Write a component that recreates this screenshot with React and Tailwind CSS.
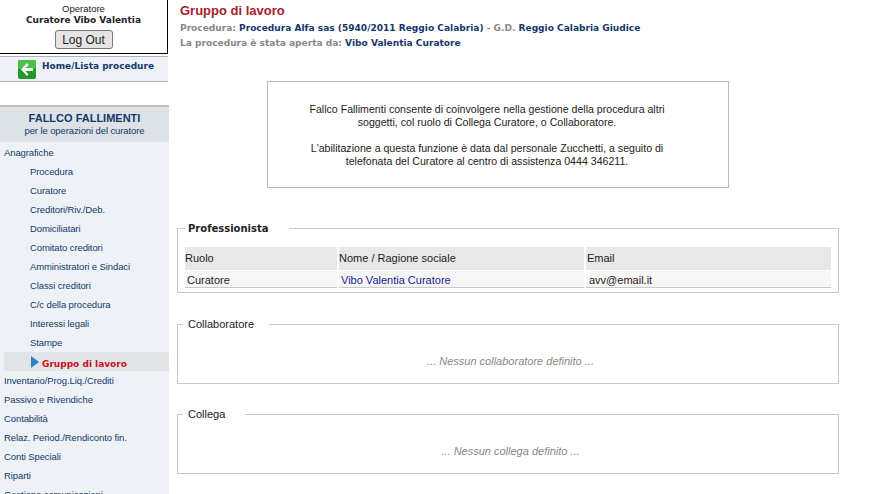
// App.jsx
const menuSub = ['Procedura', 'Curatore', 'Creditori/Riv./Deb.', 'Domiciliatari', 'Comitato creditori', 'Amministratori e Sindaci', 'Classi creditori', 'C/c della procedura', 'Interessi legali', 'Stampe'];
const menuMain = ['Inventario/Prog.Liq./Crediti', 'Passivo e Rivendiche', 'Contabilità', 'Relaz. Period./Rendiconto fin.', 'Conti Speciali', 'Riparti', 'Gestione comunicazioni'];

const sans = "font-['Liberation_Sans',sans-serif]";
const verdana = "font-['DejaVu_Sans',sans-serif]";

function Sidebar() {
  return (
    <aside className="w-[169px] shrink-0 h-[494px] overflow-hidden">
      <div className="w-[168px] h-[54px] bg-white border-r border-b border-black flex flex-col items-center pt-[3px]">
        <div className="text-[9.5px] leading-[12px] text-[#222]">Operatore</div>
        <div className={`${verdana} text-[9px] leading-[11px] font-bold text-[#222]`}>Curatore Vibo Valentia</div>
        <button className="mt-[4px] w-[58px] h-[19px] text-[12px] leading-[16px] text-[#222] rounded-[3px] border border-[#777] bg-[#e4e4e4]">Log Out</button>
      </div>
      <div className="w-[168px] h-[26px] mt-[2px] bg-[#eef2f7] border-t border-b border-[#b0b4b8] flex pl-[18px] pt-[1px] gap-[6px]">
        <svg width="18" height="19" viewBox="0 0 18 19" className="mt-[2px]">
          <rect width="18" height="19" rx="2" fill="#1f9a26" />
          <rect width="18" height="9" rx="2" fill="#4cc04a" />
          <path d="M15 8H7.5l3-3.2L9 3 3 9.5l6 6.5 1.5-1.8-3-3.2H15z" fill="#fff" />
        </svg>
        <span className={`${verdana} text-[9px] leading-[12px] mt-[2px] font-bold text-[#14386b]`}>Home/Lista procedure</span>
      </div>
      <div className="mt-[23px] h-[37px] bg-[#dde2e6] border-t-2 border-[#bcc0c3] text-center pt-[5px]">
        <div className="text-[11px] leading-[13px] font-bold text-[#14386b]">FALLCO FALLIMENTI</div>
        <div className="text-[9.5px] leading-[12px] tracking-[-0.1px] text-[#14386b]">per le operazioni del curatore</div>
      </div>
      <nav className="bg-[#eef2f7] h-[352px] pt-[1px] text-[9.5px] tracking-[-0.1px] text-[#14386b]">
        <div className="h-[19px] leading-[19px] pl-[4px]">Anagrafiche</div>
        {menuSub.map((item) => (
          <div key={item} className="h-[19px] leading-[19px] pl-[30px]">{item}</div>
        ))}
        <div className="h-[19px] ml-[4px] bg-[#e2e5e8] flex items-center pl-[27px] pt-[7px]">
          <svg width="8" height="12" viewBox="0 0 8 12" className="-mt-[6px]"><path d="M0 0l8 6-8 6z" fill="#2a7fc9" /></svg>
          <span className={`${verdana} ml-[3px] text-[9px] tracking-normal font-bold text-[#c8101a]`}>Gruppo di lavoro</span>
        </div>
        {menuMain.map((item) => (
          <div key={item} className="h-[19px] leading-[19px] pl-[4px]">{item}</div>
        ))}
      </nav>
    </aside>
  );
}

function EmptyGroup({ title, message, gap }) {
  return (
    <fieldset className="border border-[#c8c8c8] h-[66px] pl-[5px]">
      <legend className="text-[11px] leading-[13px] text-[#222] pl-[5px]" style={{ paddingRight: gap }}>{title}</legend>
      <div className="text-center text-[11px] italic text-[#888] mt-[22px]">{message}</div>
    </fieldset>
  );
}

export default function App() {
  return (
    <div className={`${sans} flex w-[871px] h-[494px] overflow-hidden bg-white`}>
      <Sidebar />
      <main className="flex-1 pl-[8px] pr-[32px]">
        <div className="pl-[3px] pt-[3px]">
          <h1 className="text-[13px] leading-[16px] font-bold text-[#a8202a]">Gruppo di lavoro</h1>
          <p className={`${verdana} mt-[2px] text-[9.05px] leading-[15px] font-bold text-[#888]`}>
            Procedura: <span className="text-[#14386b]">Procedura Alfa sas (5940/2011 Reggio Calabria)</span> - G.D. <span className="text-[#14386b]">Reggio Calabria Giudice</span>
          </p>
          <p className={`${verdana} text-[9.05px] leading-[15px] font-bold text-[#888]`}>
            La procedura è stata aperta da: <span className="text-[#14386b]">Vibo Valentia Curatore</span>
          </p>
        </div>
        <div className="mt-[30px] ml-[90px] w-[462px] h-[107px] border border-[#b8b8b8] pt-[21px] pr-[22px] text-center text-[10.6px] leading-[13px] text-[#222]">
          <p>Fallco Fallimenti consente di coinvolgere nella gestione della procedura altri<br />soggetti, col ruolo di Collega Curatore, o Collaboratore.</p>
          <p className="mt-[13px]">L'abilitazione a questa funzione è data dal personale Zucchetti, a seguito di<br />telefonata del Curatore al centro di assistenza 0444 346211.</p>
        </div>
        <fieldset className="mt-[34px] mr-[2px] border border-[#c8c8c8] h-[71px] px-[7px]">
          <legend className={`${verdana} text-[10px] leading-[13px] font-bold text-[#222] pl-[3px] pr-[20px]`}>Professionista</legend>
          <div className="grid grid-cols-[152px_245px_245px] gap-x-[2px] text-[11px] text-[#222] mt-[12px]">
            <div className="h-[23px] leading-[23px] bg-[#e8e8e8]">Ruolo</div>
            <div className="h-[23px] leading-[23px] bg-[#e8e8e8]">Nome / Ragione sociale</div>
            <div className="h-[23px] leading-[23px] bg-[#e8e8e8] pl-[1px]">Email</div>
            <div className="mt-[1px] h-[17px] leading-[19px] bg-[#f6f6f6] border-b border-[#c8c8c8] pl-[2px]">Curatore</div>
            <div className="mt-[1px] h-[17px] leading-[19px] bg-[#f6f6f6] border-b border-[#c8c8c8] pl-[2px] text-[#1a1a8c]">Vibo Valentia Curatore</div>
            <div className="mt-[1px] h-[17px] leading-[19px] bg-[#f6f6f6] border-b border-[#c8c8c8] pl-[3px]">avv@email.it</div>
          </div>
        </fieldset>
        <div className="mt-[25px] mr-[2px]">
          <EmptyGroup title="Collaboratore" message="... Nessun collaboratore definito ..." gap={15} />
        </div>
        <div className="mt-[24px] mr-[2px]">
          <EmptyGroup title="Collega" message="... Nessun collega definito ..." gap={20} />
        </div>
      </main>
    </div>
  );
}
